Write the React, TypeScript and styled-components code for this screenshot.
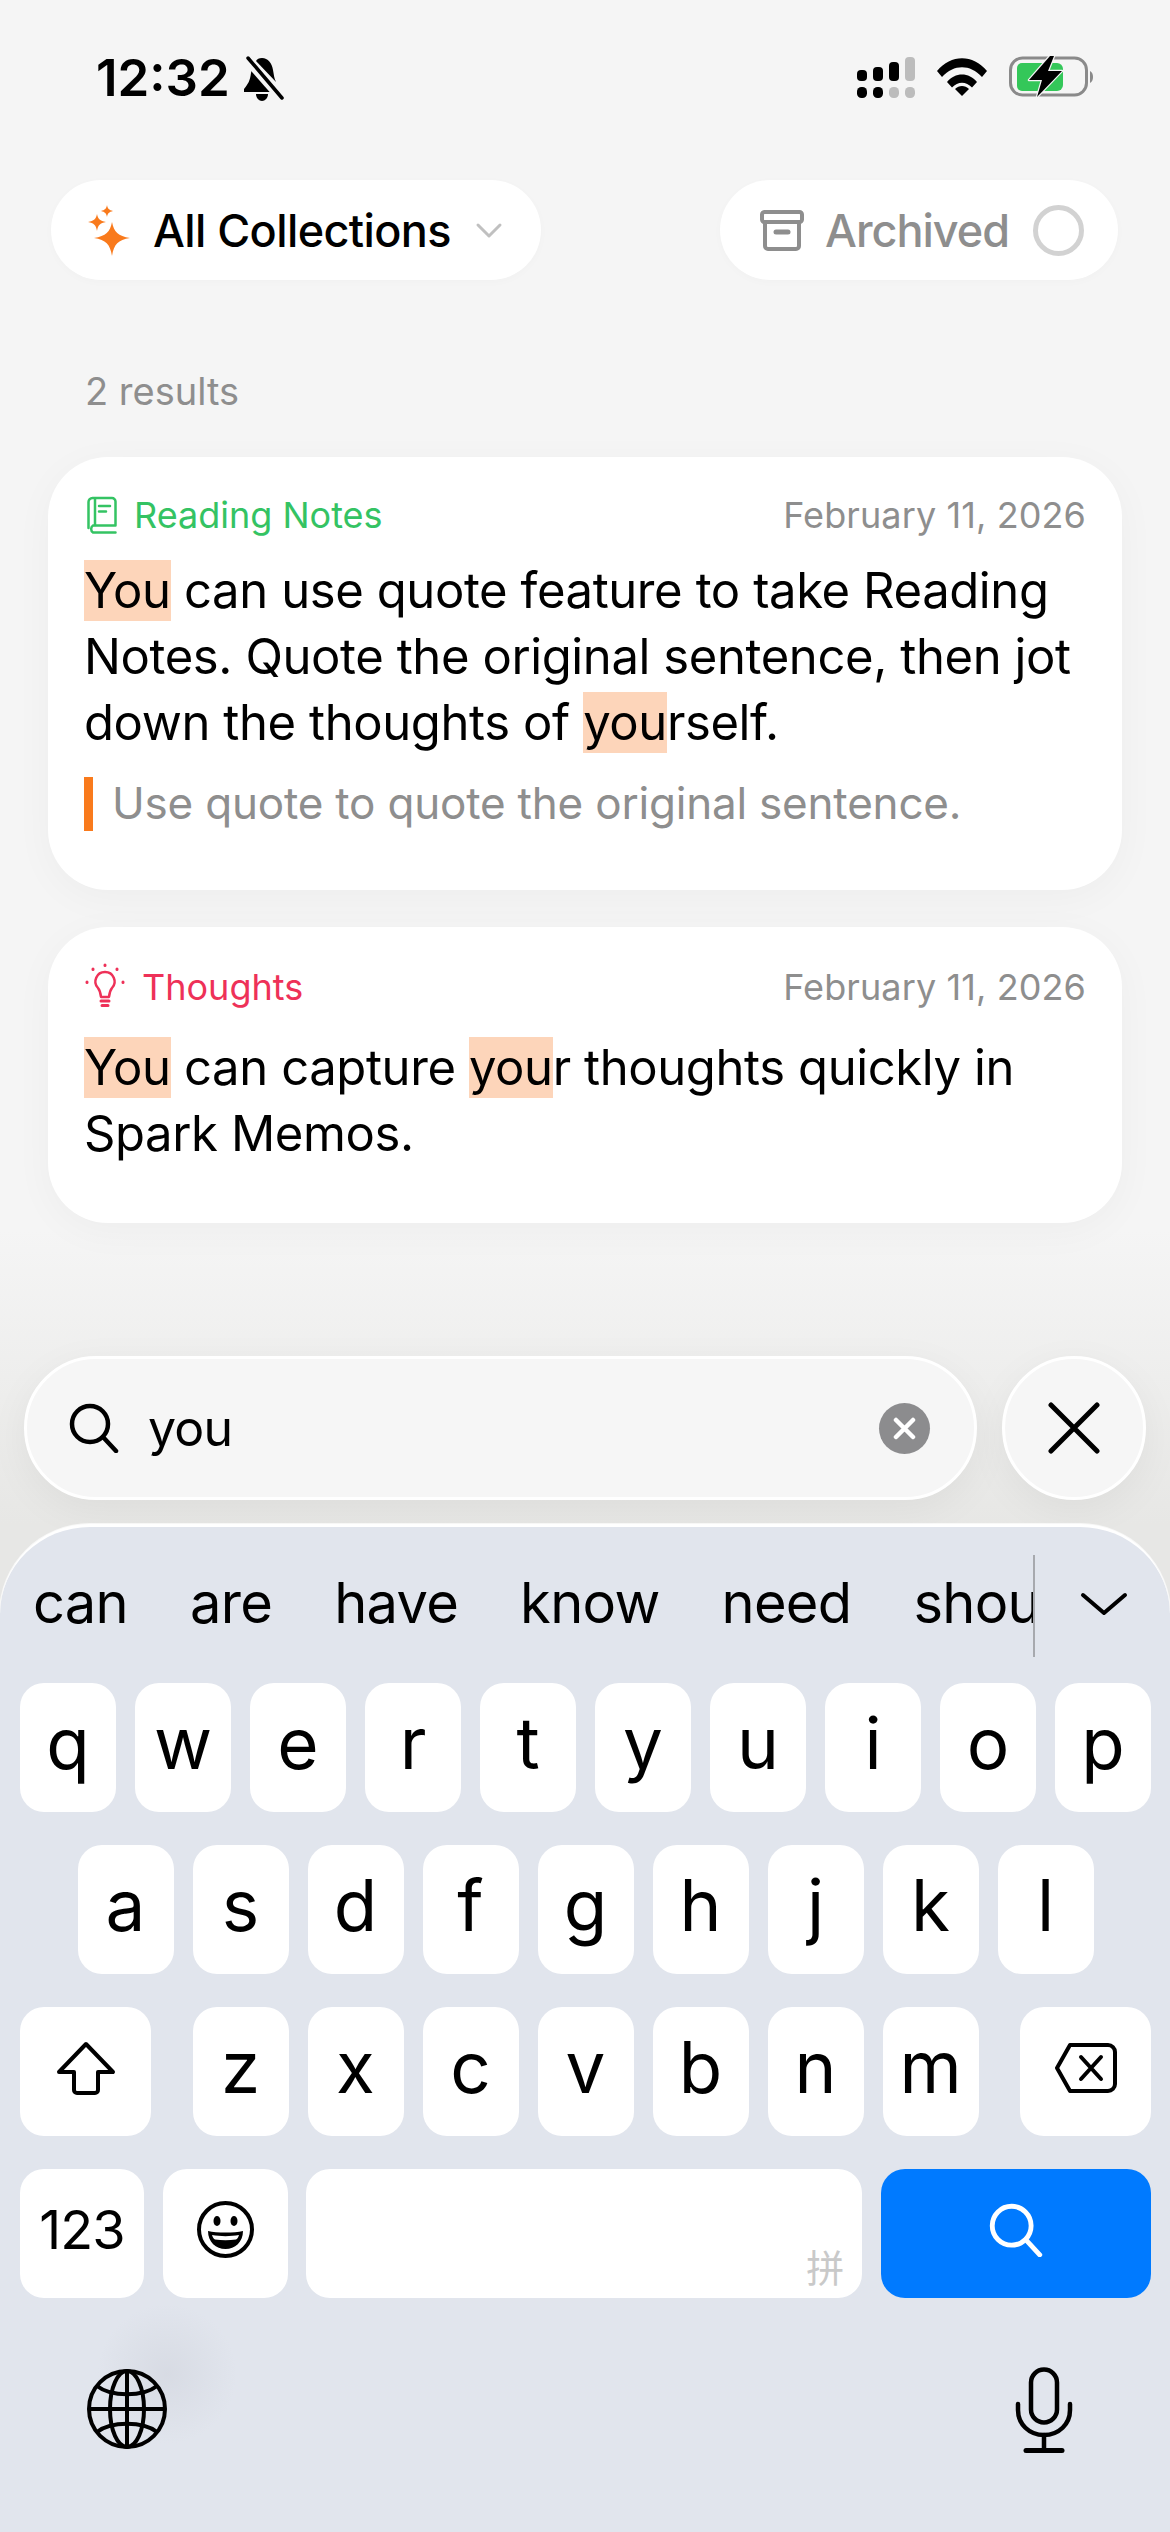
import styled, { createGlobalStyle } from 'styled-components';

const GlobalStyle = createGlobalStyle`
  html, body {
    margin: 0;
    padding: 0;
    background: #f5f5f5;
  }
  * {
    box-sizing: border-box;
  }
`;

const Page = styled.div`
  width: 1170px;
  height: 2532px;
  display: flex;
  flex-direction: column;
  overflow: hidden;
  font-family: Inter, 'Liberation Sans', sans-serif;
  color: #000;
  background: linear-gradient(to bottom, #f5f5f5 0, #f5f5f5 1230px, #e7e7e5 1524px);
`;

const StatusBar = styled.div`
  height: 180px;
  flex: none;
  padding: 56px 0 0 96px;
  display: flex;
  align-items: flex-start;
`;

const Time = styled.div`
  font-size: 51px;
  font-weight: 600;
  line-height: 44px;
`;

const BellIcon = styled.svg`
  width: 44px;
  height: 46px;
  margin: 0 0 0 11px;
`;

const StatusIcons = styled.div`
  margin-left: auto;
  padding-right: 77px;
  display: flex;
  align-items: flex-start;
  gap: 21px;
`;

const FilterRow = styled.div`
  display: flex;
  align-items: center;
  justify-content: space-between;
  padding: 0 52px 0 51px;
`;

const Pill = styled.div`
  height: 100px;
  border-radius: 50px;
  background: #fff;
  display: flex;
  align-items: center;
  box-shadow: 0 2px 10px rgba(0, 0, 0, 0.02);
`;

const CollectionsPill = styled(Pill)`
  width: 490px;
  padding-left: 33px;
`;

const ArchivedPill = styled(Pill)`
  width: 398px;
  padding-left: 40px;
`;

const PillLabel = styled.span<{ $muted?: boolean }>`
  font-size: 45px;
  font-weight: 500;
  letter-spacing: ${(p) => (p.$muted ? '-1px' : '-0.6px')};
  color: ${(p) => (p.$muted ? '#8e8e8e' : '#000')};
`;

const Radio = styled.span`
  width: 51px;
  height: 51px;
  margin-left: 24px;
  border-radius: 50%;
  border: 5px solid #d2d2d2;
`;

const ResultCount = styled.div`
  margin: 87px 0 0 85px;
  font-size: 38px;
  line-height: 48px;
  color: #8e8e8e;
`;

const CardList = styled.div`
  margin: 42px 48px 0;
  display: flex;
  flex-direction: column;
  gap: 37px;
`;

const Card = styled.div`
  padding: 40px 36px 0 36px;
  border-radius: 60px;
  background: #fff;
  box-shadow: 0 8px 40px rgba(0, 0, 0, 0.035);
`;

const ReadingCard = styled(Card)`
  height: 433px;
`;

const ThoughtsCard = styled(Card)`
  height: 296px;
  padding-top: 42px;
`;

const CardHeader = styled.div`
  height: 36px;
  display: flex;
  align-items: center;
`;

const TagIcon = styled.svg`
  flex: none;
  margin-left: 3px;
  margin-right: 17px;
  overflow: visible;
`;

const TagLabel = styled.span<{ $color: string }>`
  font-size: 36px;
  color: ${(p) => p.$color};
`;

const DateLabel = styled.span`
  margin-left: auto;
  font-size: 36px;
  letter-spacing: 0.1px;
  color: #8e8e8e;
`;

const Body = styled.p<{ $top: number }>`
  margin: ${(p) => p.$top}px 0 0;
  font-size: 49px;
  line-height: 66px;
  letter-spacing: -0.4px;
  white-space: nowrap;
`;

const Hit = styled.mark`
  background: #fdd5ba;
  color: inherit;
  padding: 1px 0;
`;

const Quote = styled.div`
  margin-top: 21px;
  height: 54px;
  padding-left: 19px;
  border-left: 9px solid #f97a1c;
  font-size: 44px;
  line-height: 52px;
  letter-spacing: -0.2px;
  color: #8e8e8e;
  white-space: nowrap;
`;

const Spacer = styled.div`
  flex: 1;
`;

const SearchRow = styled.div`
  flex: none;
  display: flex;
  gap: 25px;
  padding: 0 24px;
  margin-bottom: 24px;
`;

const SearchField = styled.div`
  width: 953px;
  height: 144px;
  padding: 0 44px 0 42px;
  border-radius: 72px;
  border: 3px solid #fff;
  background: #f6f6f6;
  display: flex;
  align-items: center;
  box-shadow: 0 10px 40px rgba(0, 0, 0, 0.05);
`;

const SearchText = styled.span`
  margin-left: 29px;
  font-size: 50px;
  letter-spacing: -0.8px;
`;

const ClearButton = styled.span`
  margin-left: auto;
  width: 51px;
  height: 51px;
  border-radius: 50%;
  background: #8c8c8e;
  display: flex;
  align-items: center;
  justify-content: center;
`;

const CloseButton = styled.div`
  width: 144px;
  height: 144px;
  border-radius: 50%;
  border: 3px solid #fff;
  background: #f6f6f6;
  display: flex;
  align-items: center;
  justify-content: center;
  box-shadow: 0 10px 40px rgba(0, 0, 0, 0.05);
`;

const Keyboard = styled.div`
  flex: none;
  height: 1008px;
  border-radius: 90px 90px 0 0;
  border-top: 3px solid #fff;
  box-shadow: 0 0 0 1px rgba(255, 255, 255, 0.7);
  background: #e1e5ed;
  padding: 0 19px 0 20px;
`;

const SuggestionBar = styled.div`
  height: 156px;
  display: flex;
  align-items: flex-start;
  margin: 0 -19px 0 -20px;
  padding-left: 33px;
`;

const Suggestions = styled.div`
  width: 1000px;
  padding-top: 41px;
  overflow: hidden;
  display: flex;
  gap: 62px;
  font-size: 56px;
  line-height: 70px;
  letter-spacing: -0.7px;
  white-space: nowrap;
`;

const Divider = styled.span`
  margin-top: 28px;
  width: 2px;
  height: 102px;
  background: #a7a9ae;
`;

const ChevronSlot = styled.span`
  margin: 64px 0 0 44px;
`;

const KeyRow = styled.div`
  height: 129px;
  margin-bottom: 33px;
  display: flex;
  justify-content: space-between;
`;

const CenteredRow = styled(KeyRow)`
  justify-content: center;
  gap: 19px;
`;

const LetterGroup = styled.div`
  display: flex;
  gap: 19px;
`;

const Key = styled.div<{ $w?: number }>`
  width: ${(p) => p.$w ?? 96}px;
  height: 129px;
  border-radius: 24px;
  background: #fff;
  display: flex;
  align-items: center;
  justify-content: center;
  font-size: 71px;
  line-height: 129px;
  padding-bottom: 8px;
`;

const NumberKey = styled(Key)`
  font-size: 54px;
  letter-spacing: -1px;
`;

const SpaceKey = styled(Key)`
  position: relative;
`;

const SpaceHint = styled.span`
  position: absolute;
  right: 18px;
  bottom: 10px;
  font-family: 'Noto Sans CJK SC', sans-serif;
  font-size: 38px;
  line-height: 44px;
  color: #c9c9c9;
`;

const SearchKey = styled(Key)`
  background: #007aff;
`;

const BottomBar = styled.div`
  display: flex;
  justify-content: space-between;
  padding: 36px 78px 0 67px;
`;

const GlobeSlot = styled.div`
  position: relative;
  width: 82px;
  height: 84px;
  margin-top: 2px;
  &::before {
    content: '';
    position: absolute;
    left: 10px;
    top: -70px;
    width: 140px;
    height: 150px;
    border-radius: 50%;
    background: radial-gradient(circle, rgba(190, 193, 203, 0.28), rgba(190, 193, 203, 0) 68%);
  }
  svg {
    position: relative;
  }
`;

const SearchGlyph = ({ color, size, sw }: { color: string; size: number; sw: number }) => (
  <svg width={size} height={size} viewBox='0 0 50 50' fill='none' stroke={color} strokeWidth={sw} strokeLinecap='round'>
    <circle cx='21' cy='21' r='18' />
    <path d='M34 34L47 48' />
  </svg>
);

const SignalIcon = () => (
  <svg width='59' height='41' viewBox='0 0 59 41' style={{ marginTop: 1 }}>
    <rect x='0' y='13' width='10' height='11' rx='4' />
    <rect x='16' y='10' width='10' height='14' rx='4' />
    <rect x='32' y='5' width='10' height='19' rx='4' />
    <rect x='48' y='0' width='10' height='24' rx='4' fill='#bcbcbc' />
    <rect x='0' y='30' width='10' height='11' rx='4.5' />
    <rect x='16' y='30' width='10' height='11' rx='4.5' />
    <rect x='32' y='30' width='10' height='11' rx='4.5' fill='#bcbcbc' />
    <rect x='48' y='30' width='10' height='11' rx='4.5' fill='#bcbcbc' />
  </svg>
);

const WifiIcon = () => (
  <svg width='50' height='38' viewBox='0 0 50 38' fill='none' style={{ marginTop: 2 }}>
    <path d='M0 13 C14 -4 36 -4 50 13 L45 19 C33 6 17 6 5 19 Z' fill='#000' />
    <path d='M10 24 C18 14 32 14 40 24 L35 29.5 C29 23 21 23 15 29.5 Z' fill='#000' />
    <path d='M18 31 C22 27 28 27 32 31 L25 38 Z' fill='#000' />
  </svg>
);

const BatteryIcon = () => (
  <svg width='84' height='42' viewBox='0 0 84 42' style={{ marginLeft: 1 }}>
    <rect x='1.5' y='2' width='76' height='37' rx='12' fill='none' stroke='#8a8a8a' strokeWidth='3' />
    <path d='M8 12a5 5 0 0 1 5-5h26v28H13a5 5 0 0 1-5-5z' fill='#34c759' />
    <path d='M36 7h12a6 6 0 0 1 6 6v16a6 6 0 0 1-6 6H32z' fill='#34c759' />
    <path d='M41 0L20 24H33L28 41L53 15H39L45 0Z' fill='#000' stroke='#f5f5f5' strokeWidth='2.5' strokeLinejoin='round' paintOrder='stroke' />
    <path d='M81 15c2 1 3 3 3 6s-1 5-3 6z' fill='#8a8a8a' />
  </svg>
);

const SparkleIcon = () => (
  <svg width='46' height='56' viewBox='0 0 46 56' fill='#f97a1c' style={{ flex: 'none', marginRight: 23, marginTop: 5 }}>
    <path d='M28 17C30 27 34 31 46 33C34 35 30 39 28 51C26 39 22 35 10 33C22 31 26 27 28 17Z' />
    <path d='M13 9C14 14 16 16 22 17C16 18 14 20 13 26C12 20 10 18 4 17C10 16 12 14 13 9Z' />
    <path d='M23 0C23.6 3.6 25 5 29 6C25 7 23.6 8.4 23 12C22.4 8.4 21 7 17 6C21 5 22.4 3.6 23 0Z' />
  </svg>
);

const ChevronIcon = ({ w, h, color, sw }: { w: number; h: number; color: string; sw: number }) => (
  <svg width={w} height={h} viewBox={`0 0 ${w} ${h}`} fill='none' stroke={color} strokeWidth={sw} strokeLinecap='round' strokeLinejoin='round' style={{ display: 'block' }}>
    <path d={`M${sw} ${sw}L${w / 2} ${h - sw}L${w - sw} ${sw}`} />
  </svg>
);

const ArchiveIcon = () => (
  <svg width='44' height='41' viewBox='0 0 44 41' fill='none' stroke='#8e8e8e' strokeWidth='4' strokeLinejoin='round' strokeLinecap='round' style={{ flex: 'none', marginRight: 21 }}>
    <rect x='2' y='2' width='40' height='10' rx='2.5' />
    <path d='M5 12V36a3 3 0 0 0 3 3H36a3 3 0 0 0 3-3V12' />
    <path d='M16 22H28' strokeWidth='5' />
  </svg>
);

const BookIcon = () => (
  <TagIcon width='30' height='37' viewBox='0 0 30 37' fill='none' stroke='#34c363' strokeWidth='2.5' strokeLinecap='round' strokeLinejoin='round'>
    <path d='M1.5 31V5a4 4 0 0 1 4-4H25a3.5 3.5 0 0 1 3.500 3.500V28.500H6a4.250 4.250 0 0 0 0 7H28.500' />
    <path d='M8 2V28' />
    <path d='M12 9H23M12 14.500H19' />
  </TagIcon>
);

const BulbIcon = () => (
  <TagIcon width='38' height='46' viewBox='0 0 38 46' fill='none' stroke='#ee3158' strokeWidth='2.5' strokeLinecap='round' strokeLinejoin='round' style={{ marginLeft: 2, marginRight: 18 }}>
    <path d='M19 8a9.500 9.500 0 0 0-7 16c2 2.500 2.500 4 3 9h8c.5-5 1-6.500 3-9a9.500 9.500 0 0 0-7-16Z' />
    <path d='M15 37H23M16 41.500H22' strokeWidth='3' />
    <path d='M19 1V1.500M7 5V5.500M31 5V5.500M1 18V18.500M37 18V18.500' strokeWidth='3' />
  </TagIcon>
);

const ShiftIcon = () => (
  <svg width='60' height='54' viewBox='0 0 60 54' fill='none' stroke='#000' strokeWidth='4' strokeLinejoin='round'>
    <path d='M30 3L57 31H42V49a3 3 0 0 1-3 3H21a3 3 0 0 1-3-3V31H3Z' />
  </svg>
);

const DeleteIcon = () => (
  <svg width='62' height='52' viewBox='0 0 62 52' fill='none' stroke='#000' strokeWidth='4' strokeLinejoin='round' strokeLinecap='round'>
    <path d='M15 3H53a7 7 0 0 1 7 7V42a7 7 0 0 1-7 7H15L2 26Z' />
    <path d='M26 15L46 37M46 15L26 37' />
  </svg>
);

const EmojiIcon = () => (
  <svg width='57' height='57' viewBox='0 0 57 57' fill='none'>
    <circle cx='28.500' cy='28.500' r='26.500' stroke='#000' strokeWidth='4' />
    <ellipse cx='20' cy='20' rx='3.500' ry='5' fill='#000' />
    <ellipse cx='37' cy='20' rx='3.500' ry='5' fill='#000' />
    <path d='M11 30C20 32 37 32 46 30C46 41 38 48 28.500 48C19 48 11 41 11 30Z' fill='#000' />
    <path d='M15 34C23 35.500 34 35.500 42 34C41 37 40 38 39 38.500C32 39.500 25 39.500 18 38.500C17 38 16 37 15 34Z' fill='#fff' />
  </svg>
);

const GlobeIcon = () => (
  <svg width='80' height='80' viewBox='0 0 80 80' fill='none' stroke='#000' strokeWidth='4' style={{ display: 'block' }}>
    <circle cx='40' cy='40' r='38' />
    <ellipse cx='40' cy='40' rx='17' ry='38' />
    <path d='M40 2V78M2 40H78' />
    <path d='M10 17C24 28 56 28 70 17M10 63C24 52 56 52 70 63' />
  </svg>
);

const MicIcon = () => (
  <svg width='58' height='86' viewBox='0 0 58 86' fill='none' stroke='#000' strokeWidth='4.500' strokeLinecap='round'>
    <rect x='16' y='2.500' width='26' height='53' rx='13' />
    <path d='M3 37V43C3 57 14 68 29 68C44 68 55 57 55 43V37' />
    <path d='M29 68V82' />
    <path d='M11 83.500H47' strokeWidth='5' />
  </svg>
);

const rowOne = ['q', 'w', 'e', 'r', 't', 'y', 'u', 'i', 'o', 'p'];
const rowTwo = ['a', 's', 'd', 'f', 'g', 'h', 'j', 'k', 'l'];
const rowThree = ['z', 'x', 'c', 'v', 'b', 'n', 'm'];
const suggestions = ['can', 'are', 'have', 'know', 'need', 'should'];

const App = () => {
  return (
    <>
      <GlobalStyle />
      <Page>
        <StatusBar>
          <Time>12:32</Time>
          <BellIcon viewBox='0 0 44 46' fill='none'>
            <path d='M10 17C9 25 7 28 3 33V36H32L12 8Z' fill='#000' />
            <path d='M21 2C27 2 31 7 32 14C33 19 33 22 35 26L15 5C16 3 18 2 21 2Z' fill='#000' />
            <path d='M15 38C15 42 18 45 21 45C24 45 27 42 27 38Z' fill='#000' />
            <path d='M5 3L41 44' stroke='#f5f5f5' strokeWidth='8' />
            <path d='M7 2L41 42' stroke='#000' strokeWidth='3.500' strokeLinecap='round' />
          </BellIcon>
          <StatusIcons>
            <SignalIcon />
            <WifiIcon />
            <BatteryIcon />
          </StatusIcons>
        </StatusBar>

        <FilterRow>
          <CollectionsPill>
            <SparkleIcon />
            <PillLabel>All Collections</PillLabel>
            <span style={{ marginLeft: 24 }}>
              <ChevronIcon w={28} h={17} color='#c0c0c0' sw={3} />
            </span>
          </CollectionsPill>
          <ArchivedPill>
            <ArchiveIcon />
            <PillLabel $muted>Archived</PillLabel>
            <Radio />
          </ArchivedPill>
        </FilterRow>

        <ResultCount>2 results</ResultCount>

        <CardList>
          <ReadingCard>
            <CardHeader>
              <BookIcon />
              <TagLabel $color='#34c363'>Reading Notes</TagLabel>
              <DateLabel>February 11, 2026</DateLabel>
            </CardHeader>
            <Body $top={25}>
              <Hit>You</Hit> can use quote feature to take Reading
              <br />
              Notes. Quote the original sentence, then jot
              <br />
              down the thoughts of <Hit>you</Hit>rself.
            </Body>
            <Quote>Use quote to quote the original sentence.</Quote>
          </ReadingCard>
          <ThoughtsCard>
            <CardHeader>
              <BulbIcon />
              <TagLabel $color='#ee3158'>Thoughts</TagLabel>
              <DateLabel>February 11, 2026</DateLabel>
            </CardHeader>
            <Body $top={30}>
              <Hit>You</Hit> can capture <Hit>you</Hit>r thoughts quickly in
              <br />
              Spark Memos.
            </Body>
          </ThoughtsCard>
        </CardList>

        <Spacer />

        <SearchRow>
          <SearchField>
            <SearchGlyph color='#000' size={50} sw={4.5} />
            <SearchText>you</SearchText>
            <ClearButton>
              <svg width='23' height='23' viewBox='0 0 23 23' stroke='#fff' strokeWidth='4.500' strokeLinecap='round'>
                <path d='M3 3L20 20M20 3L3 20' />
              </svg>
            </ClearButton>
          </SearchField>
          <CloseButton>
            <svg width='52' height='52' viewBox='0 0 52 52' stroke='#000' strokeWidth='5' strokeLinecap='round'>
              <path d='M3 3L49 49M49 3L3 49' />
            </svg>
          </CloseButton>
        </SearchRow>

        <Keyboard>
          <SuggestionBar>
            <Suggestions>
              {suggestions.map((word) => (
                <span key={word}>{word}</span>
              ))}
            </Suggestions>
            <Divider />
            <ChevronSlot>
              <ChevronIcon w={50} h={26} color='#000' sw={4} />
            </ChevronSlot>
          </SuggestionBar>

          <KeyRow>
            {rowOne.map((k) => (
              <Key key={k}>{k}</Key>
            ))}
          </KeyRow>
          <CenteredRow>
            {rowTwo.map((k) => (
              <Key key={k}>{k}</Key>
            ))}
          </CenteredRow>
          <KeyRow>
            <Key $w={131}>
              <ShiftIcon />
            </Key>
            <LetterGroup>
              {rowThree.map((k) => (
                <Key key={k}>{k}</Key>
              ))}
            </LetterGroup>
            <Key $w={131}>
              <DeleteIcon />
            </Key>
          </KeyRow>
          <KeyRow>
            <NumberKey $w={124}>123</NumberKey>
            <Key $w={125}>
              <EmojiIcon />
            </Key>
            <SpaceKey $w={556}>
              <SpaceHint>拼</SpaceHint>
            </SpaceKey>
            <SearchKey $w={270}>
              <SearchGlyph color='#fff' size={54} sw={4.5} />
            </SearchKey>
          </KeyRow>

          <BottomBar>
            <GlobeSlot>
              <GlobeIcon />
            </GlobeSlot>
            <MicIcon />
          </BottomBar>
        </Keyboard>
      </Page>
    </>
  );
};

export default App;
